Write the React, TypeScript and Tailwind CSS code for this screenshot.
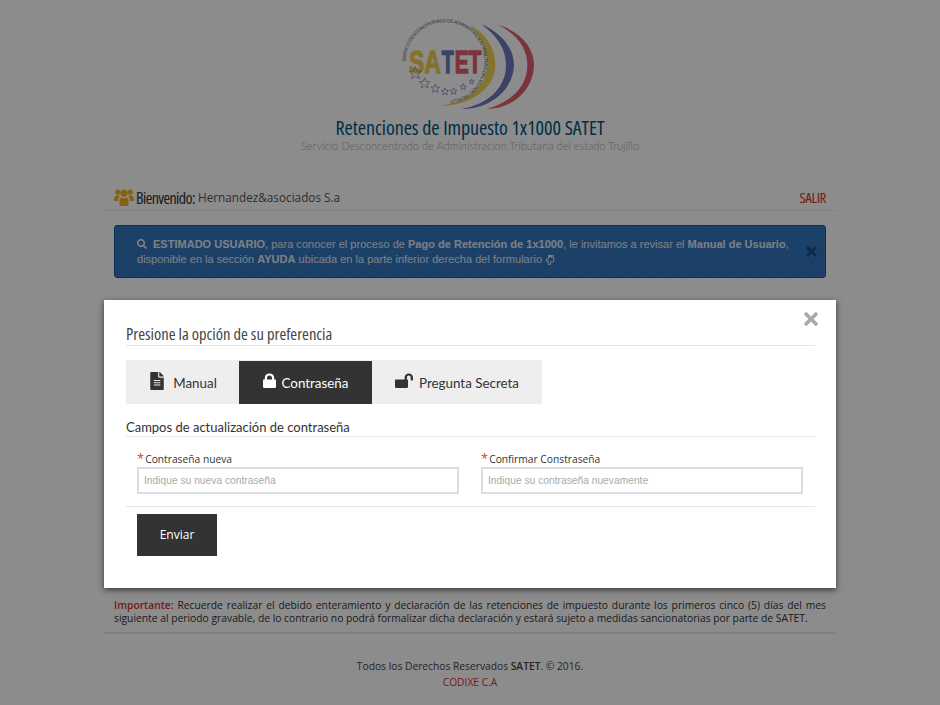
import { FaSearch, FaTimes, FaFileAlt, FaRegHandPointDown } from 'react-icons/fa'

const narrow = "font-['Open_Sans'] [font-stretch:75%]"
const arial = "font-['Liberation_Sans']"
const lato = "font-['Lato']"

function star(cx: number, cy: number, r: number) {
  const pts: string[] = []
  for (let i = 0; i < 10; i++) {
    const rad = i % 2 === 0 ? r : r * 0.42
    const a = -Math.PI / 2 + (i * Math.PI) / 5
    pts.push(`${cx + rad * Math.cos(a)},${cy + rad * Math.sin(a)}`)
  }
  return pts.join(' ')
}

const stars: [number, number, number][] = [
  [76, 190, 20], [104, 220, 17], [136, 236, 14], [165, 245, 12], [191, 244, 11], [220, 231, 10], [245, 215, 8],
]

function Logo() {
  return (
    <svg width="160" height="108" viewBox="0 0 480 324" className="-ml-[1px]">
      <path d="M320 43 C395 65 432 115 432 165 C430 240 370 295 290 297 C355 280 412 235 412 165 C412 115 380 70 320 43 Z" fill="#e0606c" />
      <path d="M275 43 C335 70 372 115 372 165 C370 240 300 297 215 297 C285 285 348 240 348 165 C348 115 318 75 275 43 Z" fill="#6a78bc" />
      <path d="M240 45 C290 70 318 120 316 170 C312 235 240 290 145 287 C215 283 292 240 292 165 C292 115 270 75 240 45 Z" fill="#f0d555" />
      <defs>
        <path id="logo-ring" d="M47 155 A118 118 0 1 1 140 270" />
      </defs>
      <text fontFamily="'Liberation Sans', sans-serif" fontSize="14" fill="#555">
        <textPath href="#logo-ring" textLength="540" lengthAdjust="spacing">SERVICIO DESCONCENTRADO DE ADMINISTRACION TRIBUTARIA DEL ESTADO TRUJILLO</textPath>
      </text>
      <g fontFamily="'Liberation Sans', sans-serif" fontWeight="700" fontSize="96" strokeWidth="4">
        <text x="57" y="189" textLength="96" lengthAdjust="spacingAndGlyphs" fill="#f0d050" stroke="#f0d050">SA</text>
        <text x="155" y="189" textLength="36" lengthAdjust="spacingAndGlyphs" fill="#6a78bc" stroke="#6a78bc">T</text>
        <text x="194" y="189" textLength="80" lengthAdjust="spacingAndGlyphs" fill="#e0606c" stroke="#e0606c">ET</text>
      </g>
      <g fill="none" stroke="#6a78bc" strokeWidth="2">
        {stars.map(([x, y, r]) => (
          <polygon key={x} points={star(x, y, r)} />
        ))}
      </g>
    </svg>
  )
}

function UsersIcon() {
  return (
    <svg width="20" height="20" viewBox="0 0 20 20" className="text-[#f4b120]" fill="currentColor">
      <circle cx="3.8" cy="4.2" r="2.6" />
      <circle cx="16.2" cy="4.2" r="2.6" />
      <circle cx="10" cy="5.2" r="3.6" />
      <path d="M0 12 C0 8.5 1.5 7.6 3.8 7.6 C4.6 7.6 5.2 7.8 5.6 8.2 C4.6 9.6 4.2 11 4.2 13 L1 13 C.3 13 0 12.6 0 12 Z" />
      <path d="M20 12 C20 8.5 18.5 7.6 16.2 7.6 C15.4 7.6 14.8 7.8 14.4 8.2 C15.4 9.6 15.8 11 15.8 13 L19 13 C19.7 13 20 12.6 20 12 Z" />
      <path d="M5.4 16 C5.4 11 6.4 9.4 7.6 9.4 C8.4 10 9.1 10.2 10 10.2 C10.9 10.2 11.6 10 12.4 9.4 C13.6 9.4 14.6 11 14.6 16 C14.6 17.4 13.8 18 12.8 18 L7.2 18 C6.2 18 5.4 17.4 5.4 16 Z" />
    </svg>
  )
}

function LockIcon() {
  return (
    <svg width="13" height="15" viewBox="0 0 13 15" fill="currentColor">
      <path fillRule="evenodd" d="M1.8 6.5 L1.8 5 C1.8 2 3.6 0.4 6.5 0.4 C9.4 0.4 11.2 2 11.2 5 L11.2 6.5 L12 6.5 C12.6 6.5 13 6.9 13 7.5 L13 13.8 C13 14.5 12.6 15 12 15 L1 15 C.4 15 0 14.5 0 13.8 L0 7.5 C0 6.9 .4 6.5 1 6.5 Z M4 6.5 L9 6.5 L9 5 C9 3.4 8 2.5 6.5 2.5 C5 2.5 4 3.4 4 5 Z" />
    </svg>
  )
}

function UnlockIcon() {
  return (
    <svg width="18" height="15" viewBox="0 0 18 15" fill="currentColor">
      <path d="M1 6.5 L9.6 6.5 L9.6 4.6 C9.6 2 11.2 .4 13.8 .4 C16.4 .4 18 2 18 4.6 L18 6.8 C18 7.3 17.7 7.6 17.2 7.6 L16.4 7.6 C15.9 7.6 15.7 7.3 15.7 6.8 L15.7 4.6 C15.7 3.3 14.9 2.6 13.8 2.6 C12.7 2.6 11.9 3.3 11.9 4.6 L11.9 6.5 L12 6.5 C12.6 6.5 13 6.9 13 7.5 L13 13.8 C13 14.5 12.6 15 12 15 L1 15 C.4 15 0 14.5 0 13.8 L0 7.5 C0 6.9 .4 6.5 1 6.5 Z" />
    </svg>
  )
}

export default function App() {
  return (
    <div className="relative h-[705px] overflow-hidden bg-white text-[#333] font-['Open_Sans']">
      <div className="w-[732px] mx-auto">
        <div className="flex flex-col items-center pt-[10px]">
          <Logo />
          <h1 className={`h-[20px] text-[20px] leading-[20px] font-medium tracking-[-0.05px] text-[#005580] ${narrow}`}>Retenciones de Impuesto 1x1000 SATET</h1>
          <p className={`mt-[1px] text-[11px] leading-[14px] font-light text-[#aaa] ${lato}`}>Servicio Desconcentrado de Administración Tributaria del estado Trujillo</p>
        </div>

        <div className="mt-[32px] h-[26px] flex items-center justify-between px-[10px] border-b border-[#eaeaea]">
          <div className="flex items-center">
            <UsersIcon />
            <span className={`ml-[2px] text-[16px] font-medium tracking-[-0.6px] ${narrow}`}>Bienvenido:</span>
            <span className="ml-[3px] text-[11.75px] text-[#555]">Hernandez&amp;asociados S.a</span>
          </div>
          <a className={`text-[15px] tracking-[-0.4px] text-[#d9322a] ${narrow}`}>SALIR</a>
        </div>

        <div className={`mt-[14px] mx-[10px] h-[53px] flex items-center rounded-[3px] border border-[#155a9c] bg-[repeating-linear-gradient(135deg,#3270b4_0px,#3270b4_1px,#3678bf_1px,#3678bf_3px)] pl-[22px] pr-[6px] text-white/85 ${arial}`}>
          <p className="flex-1 text-[11px] leading-[15px] tracking-[0.015px]">
            <FaSearch className="inline text-[10px] mr-[6px] align-[-1px]" />
            <b>ESTIMADO USUARIO</b>, para conocer el proceso de <b>Pago de Retención de 1x1000</b>, le invitamos a revisar el <b>Manual de Usuario</b>, disponible en la sección <b>AYUDA</b> ubicada en la parte inferior derecha del formulario <FaRegHandPointDown className="inline text-[10px]" />
          </p>
          <FaTimes className="text-[#184a80] text-[15px] ml-[10px]" />
        </div>

        <div className="mt-[321px] px-[10px] pb-[7px] border-b-2 border-[#eaeaea] text-[10.3px] leading-[13px] text-justify">
          <span className="font-semibold text-[#d9322a]">Importante:</span> Recuerde realizar el debido enteramiento y declaración de las retenciones de impuesto durante los primeros cinco (5) días del mes siguiente al periodo gravable, de lo contrario no podrá formalizar dicha declaración y estará sujeto a medidas sancionatorias por parte de SATET.
        </div>

        <div className="mt-[24px] text-center text-[10.25px] leading-[16px] text-[#444]">
          <p>Todos los Derechos Reservados <b className="font-semibold">SATET</b>. © 2016.</p>
          <p className="text-[#d9322a]">CODIXE C.A</p>
        </div>
      </div>

      <div className="absolute inset-0 bg-black/[0.45]" />

      <div className="absolute left-[104px] top-[300px] w-[732px] h-[288px] bg-white shadow-[0_2px_6px_rgba(0,0,0,0.6)] pl-[22px] pr-[21px] pt-[24px]">
        <FaTimes className="absolute right-[15px] top-[9px] text-[#aaa] text-[20px]" />
        <h2 className={`h-[22px] border-b border-[#e5e5e5] text-[16.5px] leading-[20px] font-medium text-[#444] ${narrow}`}>Presione la opción de su preferencia</h2>

        <div className={`mt-[14px] w-[416px] h-[44px] flex bg-[#eee] text-[13.4px] pt-[1px] ${lato}`}>
          <div className="w-[113px] flex items-center justify-center gap-[7px]"><FaFileAlt className="text-[18px] -mt-[4px]" /><span className="mt-[1px]">Manual</span></div>
          <div className="w-[133px] flex items-center justify-center gap-[6px] bg-[#333] text-white"><span className="-mt-[4px]"><LockIcon /></span><span className="mt-[1px]">Contraseña</span></div>
          <div className="w-[170px] flex items-center justify-center gap-[6px]"><span className="-mt-[4px]"><UnlockIcon /></span><span className="mt-[1px]">Pregunta Secreta</span></div>
        </div>

        <h3 className={`mt-[15px] h-[17px] border-b border-[#e5e5e5] text-[13px] leading-[16px] box-content ${lato}`}>Campos de actualización de contraseña</h3>

        <div className="mt-[14px] pl-[11px] pr-[12px] grid grid-cols-2 gap-x-[22px]">
          <label className="block text-[10.25px] leading-[15px]">
            <span className="text-[#e8321e] text-[13px] mr-[1px]">*</span>Contraseña nueva
            <input placeholder="Indique su nueva contraseña" className={`block w-full h-[27px] px-[5px] border-2 border-[#ddd] outline-none text-[10.25px] placeholder:text-[#aaa] ${arial}`} />
          </label>
          <label className="block text-[10.25px] leading-[15px]">
            <span className="text-[#e8321e] text-[13px] mr-[1px]">*</span>Confirmar Constraseña
            <input placeholder="Indique su contraseña nuevamente" className={`block w-full h-[27px] px-[5px] border-2 border-[#ddd] outline-none text-[10.25px] placeholder:text-[#aaa] ${arial}`} />
          </label>
        </div>

        <div className="mt-[12px] border-t border-[#e5e5e5] pt-[7px] px-[11px]">
          <button className="w-[80px] h-[42px] bg-[#333] text-white text-[12px]">Enviar</button>
        </div>
      </div>
    </div>
  )
}
